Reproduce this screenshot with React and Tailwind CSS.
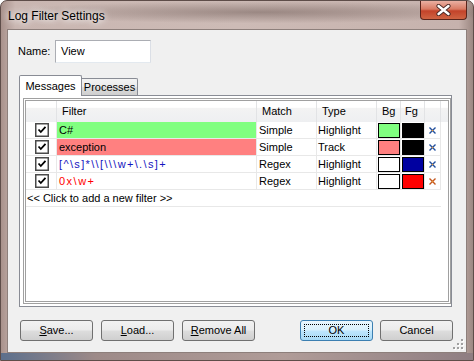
import React from 'react';

const filters = [
  { on: true, text: 'C#', color: 'text-black', rowBg: 'bg-[#80ff80]', match: 'Simple', type: 'Highlight', bg: 'bg-[#80ff80]', fg: 'bg-black', x: '#1f4fa0' },
  { on: true, text: 'exception', color: 'text-black', rowBg: 'bg-[#ff8080]', match: 'Simple', type: 'Track', bg: 'bg-[#ff8080]', fg: 'bg-black', x: '#1f4fa0' },
  { on: true, text: String.raw`[^\s]*\\[\\\w+\.\s]+`, color: 'text-[#1414c0] tracking-[1.35px]', rowBg: '', match: 'Regex', type: 'Highlight', bg: 'bg-white', fg: 'bg-[#0000a0]', x: '#1f4fa0' },
  { on: true, text: String.raw`0x\w+`, color: 'text-[#ff0000] tracking-[1.5px]', rowBg: '', match: 'Regex', type: 'Highlight', bg: 'bg-white', fg: 'bg-[#ff0000]', x: '#c4561c' },
];

function Check() {
  return (
    <svg width="14" height="14" viewBox="0 0 14 14">
      <rect x="0.75" y="0.75" width="12.5" height="12.5" fill="#fff" stroke="#4a4a4a" strokeWidth="1.5" />
      <path d="M3.5 6.5 L5.8 9 L10.5 3.8" fill="none" stroke="#000" strokeWidth="1.8" />
    </svg>
  );
}

function RemoveX({ color }) {
  return (
    <svg width="7" height="7" viewBox="0 0 7 7">
      <path d="M0.5 0.5 L6.5 6.5 M6.5 0.5 L0.5 6.5" stroke={color} strokeWidth="1.4" />
      <rect x="2.8" y="2.8" width="1.4" height="1.4" fill="#e8902a" />
    </svg>
  );
}

function Btn({ children, focused, className = '' }) {
  return (
    <button
      className={
        'relative w-[73px] h-[21px] rounded-[3px] border text-[11px] text-black flex items-center justify-center ' +
        (focused
          ? 'border-[#3c7fb1] bg-[linear-gradient(180deg,#eaf6fd_0%,#d9f0fc_48%,#bee6fd_52%,#a7d9f5_100%)] '
          : 'border-[#707070] bg-[linear-gradient(180deg,#f2f2f2_0%,#ebebeb_48%,#dddddd_52%,#cfcfcf_100%)] ') +
        className
      }
    >
      {focused && <span className="absolute inset-[3px] border border-dotted border-black" />}
      <span className="relative">{children}</span>
    </button>
  );
}

export default function App() {
  return (
    <div className="w-[474px] h-[361px] overflow-hidden flex flex-col rounded-t-[7px] border border-[#5e4d49] bg-[linear-gradient(90deg,#a8918b_0%,#c9b6b1_3%,#cdbbb6_50%,#c6b2ad_97%,#9c8882_100%)] font-['Liberation_Sans',Arial,sans-serif]">
      {/* title bar */}
      <div className="h-[28px] flex items-start justify-between bg-[radial-gradient(ellipse_55%_40%_at_55%_40%,rgba(80,60,55,0.4),transparent)]">
        <span className="pl-[7px] pt-[6px] text-[12px] text-black [text-shadow:0_0_6px_#fff,0_0_10px_#fff]">
          Log Filter Settings
        </span>
        <div className="mr-[6px] w-[47px] h-[19px] rounded-b-[4px] border border-t-0 border-[#5a241b] bg-[linear-gradient(180deg,#eab0a2_0%,#d97a63_45%,#c3432a_55%,#cf6443_100%)] flex items-center justify-center">
          <svg width="15" height="12" viewBox="0 0 15 12">
            <path d="M2.5 2 L12.5 10 M12.5 2 L2.5 10" stroke="#4a2a26" strokeWidth="4.2" strokeLinecap="round" />
            <path d="M2.5 2 L12.5 10 M12.5 2 L2.5 10" stroke="#fff" strokeWidth="2.4" strokeLinecap="round" />
          </svg>
        </div>
      </div>

      {/* client area */}
      <div className="relative ml-[6px] w-[460px] h-[324px] border border-[#8d7f7b] bg-[#f0f0f0] text-[11px] text-black">
        {/* name */}
        <div className="flex items-center mt-[10px] pl-[10px] h-[23px]">
          <span className="w-[37px]">Name:</span>
          <div className="w-[96px] h-[23px] border border-[#abadb3] border-b-[#e3e9ef] border-r-[#dbdfe6] bg-white flex items-center pl-[5px]">
            View
          </div>
        </div>

        {/* tabs */}
        <div className="mt-[12px] pl-[11px] h-[20px] flex items-end">
          <div className="relative z-10 -mb-[1px] w-[63px] h-[21px] border border-b-0 border-[#898c95] rounded-t-[2px] bg-white flex items-center justify-center">
            Messages
          </div>
          <div className="w-[56px] h-[17px] border border-l-0 border-b-0 border-[#898c95] rounded-tr-[2px] bg-[linear-gradient(180deg,#f3f3f3_0%,#ebebeb_50%,#dcdcdc_51%,#cfcfcf_100%)] flex items-center justify-center">
            Processes
          </div>
        </div>

        {/* tab panel */}
        <div className="ml-[11px] w-[433px] h-[212px] border border-[#898c95] bg-white pl-[3px] pt-[2px]">
          <div className="w-[428px] h-[206px] border border-[#a0a0a0] p-[1px]">
            <div className="h-full border border-[#a0a0a0] bg-white">
              {/* header */}
              <div className="flex h-[21px] bg-[linear-gradient(180deg,#ffffff_0%,#ffffff_30%,#f3f3f3_35%,#eeeff1_100%)]">
                <div className="w-[31px] border-r border-[#e2e3e5]" />
                <div className="w-[200px] border-r border-[#e2e3e5] pl-[5px] flex items-center">Filter</div>
                <div className="w-[60px] border-r border-[#e2e3e5] pl-[5px] flex items-center">Match</div>
                <div className="w-[60px] border-r border-[#e2e3e5] pl-[5px] flex items-center">Type</div>
                <div className="w-[24px] border-r border-[#e2e3e5] pl-[5px] flex items-center">Bg</div>
                <div className="w-[24px] border-r border-[#e2e3e5] pl-[4px] flex items-center">Fg</div>
                <div className="w-[16px] border-r border-[#e2e3e5]" />
                <div className="flex-1" />
              </div>

              {/* rows */}
              <div className="w-[415px]">
                {filters.map((f, i) => (
                  <div key={i} className="flex h-[17px] border-b border-[#e8e8e8]">
                    <div className="w-[31px] border-r border-[#e8e8e8] flex items-center justify-center pl-[2px]">
                      <Check />
                    </div>
                    <div className={'w-[200px] border-r border-[#e8e8e8] pl-[2px] flex items-center ' + f.rowBg + ' ' + f.color}>
                      {f.text}
                    </div>
                    <div className="w-[60px] border-r border-[#e8e8e8] pl-[2px] flex items-center">{f.match}</div>
                    <div className="w-[60px] border-r border-[#e8e8e8] pl-[1px] flex items-center">{f.type}</div>
                    <div className="w-[24px] border-r border-[#e8e8e8] pl-[1px] pt-[1px] flex items-center">
                      <div className={'w-[22px] h-[15px] border border-black ' + f.bg} />
                    </div>
                    <div className="w-[24px] border-r border-[#e8e8e8] pl-[1px] pt-[1px] flex items-center">
                      <div className={'w-[22px] h-[15px] border border-black ' + f.fg} />
                    </div>
                    <div className="w-[16px] border-r border-[#e8e8e8] flex items-center justify-center">
                      <RemoveX color={f.x} />
                    </div>
                  </div>
                ))}
                <div className="h-[17px] border-b border-[#e8e8e8] pl-[1px] flex items-center">
                  &lt;&lt; Click to add a new filter &gt;&gt;
                </div>
              </div>
            </div>
          </div>
        </div>

        {/* buttons */}
        <div className="mt-[13px] pl-[12px] flex">
          <Btn><span className="underline">S</span>ave...</Btn>
          <Btn className="ml-[8px]"><span className="underline">L</span>oad...</Btn>
          <Btn className="ml-[8px]"><span className="underline">R</span>emove All</Btn>
          <Btn focused className="ml-[45px]">OK</Btn>
          <Btn className="ml-[7px]">Cancel</Btn>
        </div>

        {/* size grip */}
        <svg className="absolute right-[2px] bottom-[2px]" width="11" height="11" viewBox="0 0 11 11">
          {[[8, 0], [8, 4], [4, 4], [8, 8], [4, 8], [0, 8]].map(([x, y], i) => (
            <g key={i}>
              <rect x={x + 1} y={y + 1} width="2" height="2" fill="#fff" />
              <rect x={x} y={y} width="2" height="2" fill="#a0a0a0" />
            </g>
          ))}
        </svg>
      </div>
      <div className="flex-1 bg-[linear-gradient(90deg,#5c6f8c_0%,#9d8a88_20%,#b09c98_60%,#8f7e82_100%)]" />
    </div>
  );
}
